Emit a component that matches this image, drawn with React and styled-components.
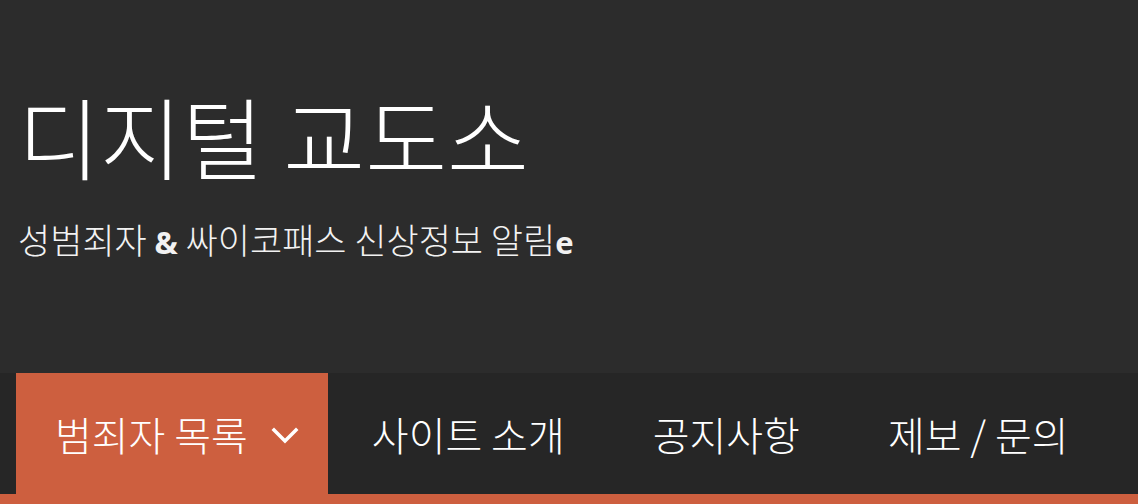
import React from 'react';
import styled, { createGlobalStyle } from 'styled-components';

const GlobalStyle = createGlobalStyle`
  html, body {
    margin: 0;
    padding: 0;
    background: #2c2c2c;
  }
  body {
    font-family: "Noto Sans CJK KR", "Noto Sans", sans-serif;
    color: #ffffff;
  }
`;

const Header = styled.header`
  width: 1138px;
  height: 504px;
  overflow: hidden;
  display: flex;
  flex-direction: column;
  background: #2c2c2c;
`;

const Branding = styled.div`
  height: 373px;
  box-sizing: border-box;
  padding: 80px 0 0 18px;
`;

const Title = styled.h1`
  margin: 0;
  font-size: 89px;
  font-weight: 300;
  line-height: 110px;
  color: #ffffff;
`;

const Subtitle = styled.p`
  margin: 27px 0 0 0;
  font-size: 35px;
  font-weight: 300;
  line-height: 44px;
  color: #f2f2f2;
`;

const Latin = styled.span`
  font-family: "Open Sans", sans-serif;
  font-weight: 700;
  font-size: 31px;
`;

const NavBar = styled.nav`
  display: flex;
  align-items: stretch;
  height: 121px;
  padding-left: 16px;
  background: #262626;
  border-bottom: 10px solid #cd5f3f;
`;

const NavItem = styled.a`
  display: flex;
  align-items: center;
  padding-left: ${(p) => (p.$active ? '39px' : '44px')};
  padding-right: ${(p) => (p.$active ? '28px' : '44px')};
  background: ${(p) => (p.$active ? '#cd5f3f' : 'transparent')};
  color: #ffffff;
  font-size: 40px;
  font-weight: 300;
  text-decoration: none;
  white-space: nowrap;
`;

const Chevron = styled.svg`
  width: 30px;
  height: 20px;
  margin-left: 22px;
  margin-top: 4px;
`;

const items = ['사이트 소개', '공지사항', '제보 / 문의'];

export default function App() {
  return (
    <>
      <GlobalStyle />
      <Header>
        <Branding>
          <Title>디지털 교도소</Title>
          <Subtitle>
            성범죄자 <Latin>&amp;</Latin> 싸이코패스 신상정보 알림<Latin>e</Latin>
          </Subtitle>
        </Branding>
        <NavBar>
          <NavItem $active href="#">
            범죄자 목록
            <Chevron viewBox="0 0 30 20">
              <path d="M4 4 L15 15 L26 4" fill="none" stroke="#fff" strokeWidth="3.5" strokeLinecap="square" />
            </Chevron>
          </NavItem>
          {items.map((label) => (
            <NavItem key={label} href="#">
              {label}
            </NavItem>
          ))}
        </NavBar>
      </Header>
    </>
  );
}
